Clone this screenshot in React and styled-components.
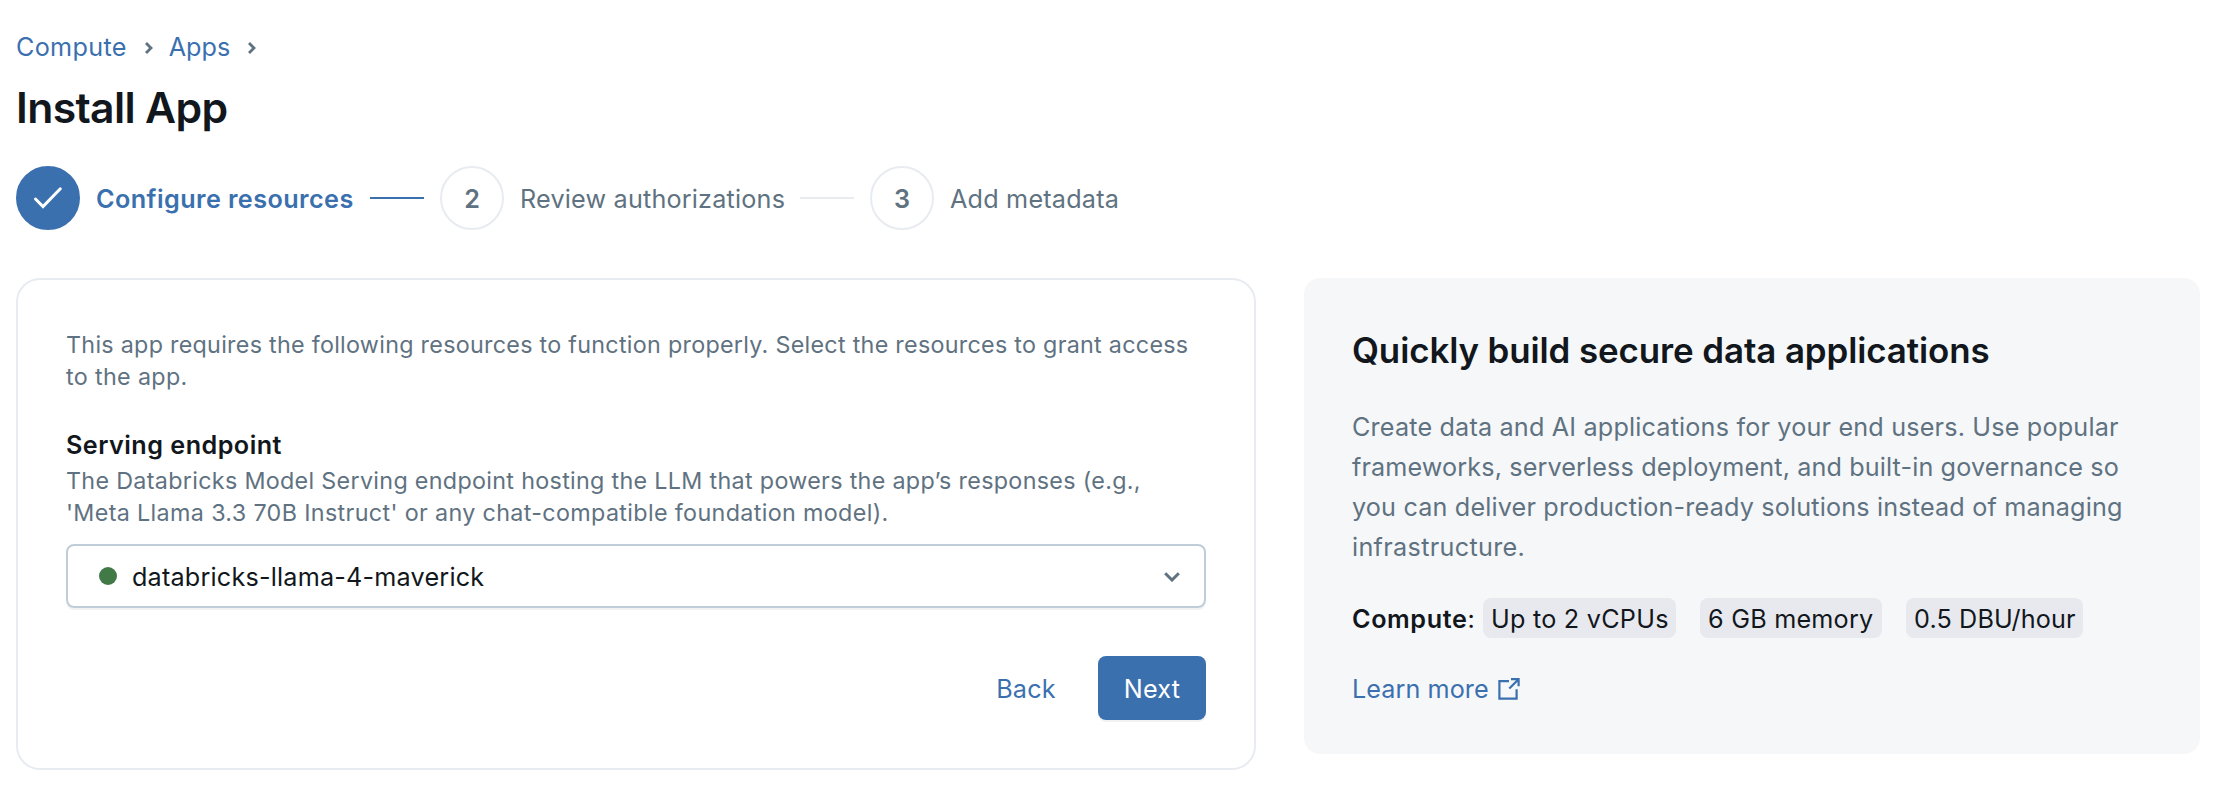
import React from 'react';
import styled, { createGlobalStyle } from 'styled-components';

const blue = '#3b70af';
const gray = '#5f7281';
const ink = '#11171c';
const line = '#e8ecf0';

const Global = createGlobalStyle`
  * { box-sizing: border-box; }
  body { margin: 0; background: #fff; color: ${ink}; font-family: Inter, sans-serif; font-size: 25.2px; }
  p, h1, h2, h3 { margin: 0; }
  button { font: inherit; }
`;
const Page = styled.main`
  width: 2228px;
  height: 786px;
  padding: 27px 28px 0 16px;
  overflow: hidden;
`;
const Crumbs = styled.nav`
  display: flex;
  align-items: center;
  line-height: 40px;
`;
const Crumb = styled.a`
  color: ${blue};
  white-space: nowrap;
  letter-spacing: ${p => p.$ls || 0}px;
`;
const CrumbArrow = styled.svg`
  flex: none;
  width: 8px;
  height: 14px;
  margin: 2px 16px 0 18px;
`;
const Title = styled.h1`
  margin-top: 12px;
  font-size: 42.7px;
  line-height: 57px;
  font-weight: 600;
  letter-spacing: -0.65px;
`;
const Steps = styled.ol`
  display: flex;
  align-items: center;
  gap: 16px;
  margin: 30px 0 48px;
  padding: 0;
  list-style: none;
`;
const Step = styled.li`
  display: flex;
  align-items: center;
  gap: 16px;
`;
const StepMark = styled.span`
  display: flex;
  align-items: center;
  justify-content: center;
  width: 64px;
  height: 64px;
  padding-top: ${p => (p.$done ? 0 : 2)}px;
  border: 2px solid ${p => (p.$done ? blue : line)};
  border-radius: 50%;
  background: ${p => (p.$done ? blue : '#fff')};
  color: ${gray};
  font-weight: 600;
`;
const StepLabel = styled.span`
  width: ${p => p.$w}px;
  padding-top: 2px;
  line-height: 40px;
  white-space: nowrap;
  color: ${p => (p.$active ? blue : gray)};
  font-weight: ${p => (p.$active ? 600 : 400)};
  letter-spacing: ${p => p.$ls}px;
`;
const StepLine = styled.li`
  width: 54px;
  height: 2px;
  background: ${p => (p.$active ? blue : line)};
`;
const Columns = styled.div`
  display: flex;
  align-items: flex-start;
  gap: 48px;
`;
const FormCard = styled.section`
  width: 1240px;
  padding: 49px 48px 48px;
  border: 2px solid ${line};
  border-radius: 24px;
`;
const Note = styled.p`
  font-size: 23.3px;
  line-height: 32px;
  color: ${gray};
`;
const TextLine = styled.span`
  display: block;
  white-space: nowrap;
  letter-spacing: ${p => p.$ls}px;
`;
const FieldLabel = styled.h3`
  margin-top: 32px;
  font-size: 25.2px;
  line-height: 40px;
  font-weight: 600;
  letter-spacing: 0.465px;
`;
const Select = styled.div`
  display: flex;
  align-items: center;
  height: 64px;
  margin-top: 15px;
  padding: 0 24px 0 31px;
  border: 2px solid #c0cdd8;
  border-radius: 8px;
  box-shadow: 0 2px 0 rgba(0, 0, 0, 0.05);
`;
const StatusDot = styled.span`
  width: 18px;
  height: 18px;
  border-radius: 50%;
  background: #417a47;
`;
const SelectValue = styled.span`
  flex: 1;
  padding: 2px 0 0 15px;
  line-height: 40px;
  letter-spacing: 0.2px;
`;
const SelectArrow = styled.svg`
  width: 16px;
  height: 10px;
  margin-top: 2px;
`;
const Actions = styled.div`
  display: flex;
  justify-content: flex-end;
  margin-top: 48px;
`;
const Button = styled.button`
  width: ${p => p.$w}px;
  height: 64px;
  padding: 2px 0 0;
  border: 0;
  border-radius: 8px;
  letter-spacing: 0.19px;
  color: ${p => (p.$primary ? '#fff' : blue)};
  background: ${p => (p.$primary ? blue : 'transparent')};
  box-shadow: ${p => (p.$primary ? '0 2px 0 rgba(0, 0, 0, 0.05)' : 'none')};
`;
const InfoPanel = styled.aside`
  flex: 1;
  padding: 48px 48px 45px;
  border-radius: 16px;
  background: #f6f7f9;
`;
const InfoTitle = styled.h2`
  font-size: 34.9px;
  line-height: 48px;
  font-weight: 600;
  letter-spacing: -0.099px;
  white-space: nowrap;
`;
const InfoText = styled.p`
  margin-top: 33px;
  line-height: 40px;
  color: ${gray};
`;
const ComputeRow = styled.div`
  display: flex;
  gap: 24px;
  margin-top: 31px;
  line-height: 40px;
`;
const ComputeLabel = styled.span`
  width: 131px;
  margin-right: -24px;
  padding-top: 1px;
  white-space: nowrap;
  letter-spacing: 0.6px;
  & > b { font-weight: 600; }
`;
const Chip = styled.span`
  width: ${p => p.$w}px;
  height: 40px;
  padding: 1px 0 0 8px;
  border-radius: 8px;
  background: #e8e9ee;
  white-space: nowrap;
  letter-spacing: ${p => p.$ls}px;
`;
const LearnMore = styled.a`
  display: flex;
  align-items: center;
  gap: 9px;
  margin-top: 30px;
  line-height: 40px;
  color: ${blue};
  letter-spacing: 0.068px;
`;

const Arrow = () => (
  <CrumbArrow viewBox="0 0 8 14" fill="none" stroke={gray} strokeWidth="2.8">
    <path d="M1 1.9 6 7 1 12.1" />
  </CrumbArrow>
);

export default function App() {
  return (
    <>
      <Global />
      <Page>
        <Crumbs>
          <Crumb $ls={0.3}>Compute</Crumb>
          <Arrow />
          <Crumb>Apps</Crumb>
          <Arrow />
        </Crumbs>
        <Title>Install App</Title>
        <Steps>
          <Step>
            <StepMark $done>
              <svg width="32" height="32" viewBox="0 0 32 32" fill="none" stroke="#fff" strokeWidth="3" strokeLinecap="round">
                <path d="M3.5 17 11 24.5 28.3 6.8" />
              </svg>
            </StepMark>
            <StepLabel $active $w={258} $ls={0.43}>Configure resources</StepLabel>
          </Step>
          <StepLine $active />
          <Step>
            <StepMark>2</StepMark>
            <StepLabel $w={264} $ls={0.19}>Review authorizations</StepLabel>
          </Step>
          <StepLine />
          <Step>
            <StepMark>3</StepMark>
            <StepLabel $w={170} $ls={0.201}>Add metadata</StepLabel>
          </Step>
        </Steps>
        <Columns>
          <FormCard>
            <Note>
              <TextLine $ls={0.284}>This app requires the following resources to function properly. Select the resources to grant access</TextLine>
              <TextLine $ls={0.35}>to the app.</TextLine>
            </Note>
            <FieldLabel>Serving endpoint</FieldLabel>
            <Note>
              <TextLine $ls={0.316}>The Databricks Model Serving endpoint hosting the LLM that powers the app’s responses (e.g.,</TextLine>
              <TextLine $ls={0.352}>'Meta Llama 3.3 70B Instruct' or any chat-compatible foundation model).</TextLine>
            </Note>
            <Select>
              <StatusDot />
              <SelectValue>databricks-llama-4-maverick</SelectValue>
              <SelectArrow viewBox="0 0 16 10" fill="none" stroke={gray} strokeWidth="3">
                <path d="M1.2 1.2 8 8 14.8 1.2" />
              </SelectArrow>
            </Select>
            <Actions>
              <Button $w={144}>Back</Button>
              <Button $primary $w={108}>Next</Button>
            </Actions>
          </FormCard>
          <InfoPanel>
            <InfoTitle>Quickly build secure data applications</InfoTitle>
            <InfoText>
              <TextLine $ls={0.172}>Create data and AI applications for your end users. Use popular</TextLine>
              <TextLine $ls={0.121}>frameworks, serverless deployment, and built-in governance so</TextLine>
              <TextLine $ls={0.165}>you can deliver production-ready solutions instead of managing</TextLine>
              <TextLine $ls={0.321}>infrastructure.</TextLine>
            </InfoText>
            <ComputeRow>
              <ComputeLabel><b>Compute</b>:</ComputeLabel>
              <Chip $w={193} $ls={0.24}>Up to 2 vCPUs</Chip>
              <Chip $w={182} $ls={0.215}>6 GB memory</Chip>
              <Chip $w={177} $ls={0.138}>0.5 DBU/hour</Chip>
            </ComputeRow>
            <LearnMore>
              Learn more
              <svg width="22" height="22" viewBox="0 0 22 22" fill="none" stroke={blue} strokeWidth="2.2">
                <path d="M11 3.1H1.4V20.6H18.6V11.3M13 1.1H20.6V8.2M20.3 1.5 11.3 10.6" />
              </svg>
            </LearnMore>
          </InfoPanel>
        </Columns>
      </Page>
    </>
  );
}
